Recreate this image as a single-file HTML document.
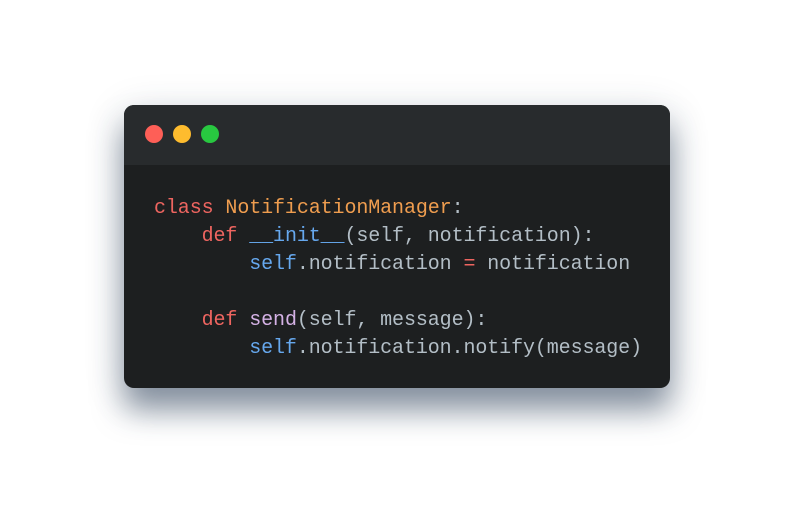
<!DOCTYPE html>
<html><head><style>
html,body{margin:0;padding:0;background:#fff;width:799px;height:530px;overflow:hidden}
.card{position:absolute;left:124px;top:105px;width:546px;height:283px;border-radius:10px;background:#1d1f20;overflow:hidden;box-shadow:0 22px 30px rgba(40,60,85,0.5),0 8px 40px rgba(40,60,85,0.18)}
.hd{height:60px;background:#282b2d;position:relative}
.d{position:absolute;top:20px;width:18px;height:18px;border-radius:50%}
pre{margin:0;position:absolute;left:30px;top:90px;font-family:"Liberation Mono",monospace;font-size:20px;letter-spacing:-0.1px;line-height:28px;color:#b3bec6}
.k{color:#ee6560}.c{color:#ef9d4f}.f{color:#66a8ee}.p{color:#d5b2e6}
</style></head><body>
<div class="card">
<div class="hd"><div class="d" style="left:21px;background:#fe5f57"></div><div class="d" style="left:49px;background:#febc2e"></div><div class="d" style="left:77px;background:#28c840"></div></div>
<pre><span class="k">class</span> <span class="c">NotificationManager</span>:
    <span class="k">def</span> <span class="f">__init__</span>(self, notification):
        <span class="f">self</span>.notification <span class="k">=</span> notification

    <span class="k">def</span> <span class="p">send</span>(self, message):
        <span class="f">self</span>.notification.notify(message)</pre>
</div>
</body></html>
